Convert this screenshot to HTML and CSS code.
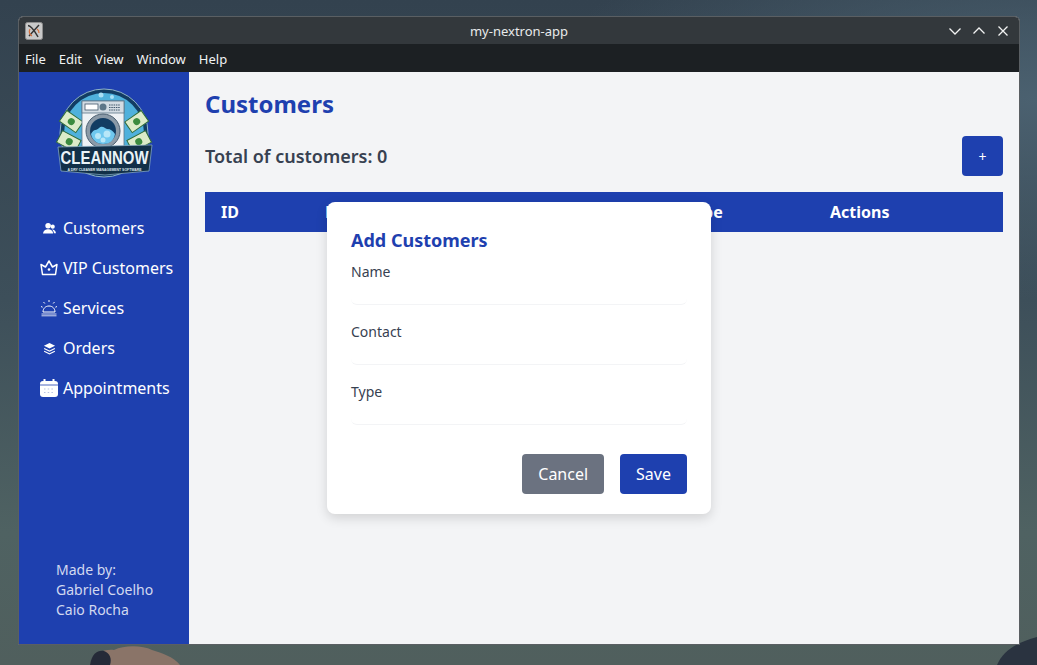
FILE: index.html
```html
<!DOCTYPE html>
<html lang="en">
<head>
<meta charset="utf-8">
<title>my-nextron-app</title>
<link rel="stylesheet" href="styles.css">
</head>
<body>
<svg class="wall-blob wall-blob-left" viewBox="0 0 90 20" aria-hidden="true"><path d="M0 20C4 8 14 4 24 5C34 0 52 0 62 5C72 8 84 12 90 20Z" fill="#8a7468"/><path d="M0 20C2 8 8 5 14 6C20 8 22 14 20 20Z" fill="#252a38"/></svg>
<svg class="wall-blob wall-blob-right" viewBox="0 0 40 28" aria-hidden="true"><path d="M0 28C6 14 18 6 40 0V28Z" fill="#2a3340"/></svg>
<div class="window">
  <header class="titlebar">
    <svg class="app-icon" viewBox="0 0 18 18" aria-hidden="true">
      <rect x=".5" y=".5" width="17" height="17" rx="2" fill="#c9c9c9" stroke="#8e8e8e"/>
      <path d="M3 3.5C7 4 10 10 13 15M14 3L4 14" fill="none" stroke="#333" stroke-width="1.4"/>
      <path d="M5 7a5 5 0 0 0 2 7M12 7a4.500 4.500 0 0 1 2 4" fill="none" stroke="#d9713c" stroke-width="1.200"/>
    </svg>
    <div class="window-title">my-nextron-app</div>
    <div class="window-controls">
      <svg class="control" viewBox="0 0 14 14" aria-hidden="true"><path d="M1.500 4.500L7 10L12.500 4.500"/></svg>
      <svg class="control" viewBox="0 0 14 14" aria-hidden="true"><path d="M1.500 9.500L7 4L12.500 9.500"/></svg>
      <svg class="control" viewBox="0 0 14 14" aria-hidden="true"><path d="M2.500 2.500L11.500 11.500M11.500 2.500L2.500 11.500"/></svg>
    </div>
  </header>
  <nav class="menubar">
    <span class="menu-item">File</span>
    <span class="menu-item">Edit</span>
    <span class="menu-item">View</span>
    <span class="menu-item">Window</span>
    <span class="menu-item">Help</span>
  </nav>
  <div class="app">
    <aside class="sidebar">
      <svg class="logo" viewBox="0 0 100 100" aria-label="CleanNow logo">
        <circle cx="49" cy="49" r="44" fill="#123d63" stroke="#8fb3c9" stroke-width="1"/>
        <circle cx="49" cy="49" r="40" fill="#4fb1dc"/>
        <g class="logo-bill" transform="rotate(35 16 38)"><rect x="6" y="31" width="20" height="13"/><circle cx="16" cy="37.500" r="3.500"/></g>
        <g class="logo-bill" transform="rotate(28 14 58)"><rect x="3" y="51" width="21" height="13"/><circle cx="14" cy="57.500" r="3.500"/></g>
        <g class="logo-bill" transform="rotate(-35 82 38)"><rect x="72" y="31" width="20" height="13"/><circle cx="82" cy="37.500" r="3.500"/></g>
        <g class="logo-bill" transform="rotate(-28 84 58)"><rect x="74" y="51" width="21" height="13"/><circle cx="84" cy="57.500" r="3.500"/></g>
        <circle cx="46" cy="11" r="2.500" fill="#a9e0f5"/><circle cx="57" cy="13" r="2" fill="#a9e0f5"/><circle cx="28" cy="75" r="3" fill="#a9e0f5"/><circle cx="71" cy="75" r="3" fill="#a9e0f5"/>
        <rect x="27" y="17" width="42" height="52" fill="#eef2f5" stroke="#5d7688" stroke-width=".8"/>
        <rect x="27" y="17" width="42" height="12" fill="#d3dce3" stroke="#5d7688" stroke-width=".8"/>
        <rect x="30" y="20" width="13" height="6" fill="#fff" stroke="#40566a" stroke-width=".8"/>
        <circle cx="48" cy="23" r="3.500" fill="#5d7688"/>
        <path d="M54 21h11M54 23.500h11M54 26h11" stroke="#40566a" stroke-width="1.200" stroke-dasharray="1.500 .8"/>
        <circle cx="48" cy="47" r="17" fill="#8b9aa7" stroke="#4d6172" stroke-width="1"/>
        <circle cx="48" cy="47" r="13" fill="#123d63"/>
        <path d="M36 50c3-6 6-3 8-6c3-3 6 0 8 1c4 0 6 2 8 5c-1 7-6 10-12 10s-11-4-12-10Z" fill="#6fc8ef"/>
        <circle cx="43" cy="52" r="3" fill="#b7e7f8"/><circle cx="52" cy="50" r="3.500" fill="#b7e7f8"/><circle cx="48" cy="56" r="2.500" fill="#b7e7f8"/>
        <path class="logo-banner" d="M3 63L97 61L94 87L50 91L6 87Z"/>
        <text class="logo-name" x="49.500" y="80" textLength="88" lengthAdjust="spacingAndGlyphs">CLEANNOW</text>
        <text class="logo-tag" x="49.500" y="86.500" textLength="74" lengthAdjust="spacingAndGlyphs">A DRY CLEANER MANAGEMENT SOFTWARE</text>
      </svg>
      <ul class="nav">
        <li class="nav-item">
          <span class="nav-icon"><svg class="icon-sm" viewBox="0 0 14 14" aria-hidden="true"><circle cx="5.500" cy="4" r="3" fill="#fff"/><path d="M0 12.500C.5 9 3 7.800 5.500 7.800S10.500 9 11 12.500Z" fill="#fff"/><circle cx="10.500" cy="5" r="2.200" fill="#fff"/><path d="M9.500 8.200C11.800 8 13.500 9.500 14 12H11.800C11.500 10.500 10.800 9.200 9.500 8.200Z" fill="#fff"/></svg></span>
          <span>Customers</span>
        </li>
        <li class="nav-item">
          <span class="nav-icon"><svg class="icon-lg" viewBox="0 0 18 18" aria-hidden="true"><path d="M2.500 15.500L1 5.500L5.500 8L9 2L12.500 8L17 5.500L15.500 15.500Z" fill="none" stroke="#fff" stroke-width="1.500" stroke-linejoin="round"/><circle cx="9" cy="10.500" r="1.300" fill="#fff"/></svg></span>
          <span>VIP Customers</span>
        </li>
        <li class="nav-item">
          <span class="nav-icon"><svg class="icon-lg" viewBox="0 0 18 18" aria-hidden="true"><path d="M3 13C3 9.500 5.500 7 9 7S15 9.500 15 13Z" fill="none" stroke="#fff"/><path d="M1.500 15H16.500M1.500 16.800H16.500" stroke="#fff" stroke-width=".8"/><path d="M9 1V3M3.500 3L4.800 4.500M14.500 3L13.200 4.500M1 7.500L2.600 8.200M17 7.500L15.400 8.200" stroke="#fff"/></svg></span>
          <span>Services</span>
        </li>
        <li class="nav-item">
          <span class="nav-icon"><svg class="icon-sm" viewBox="0 0 14 14" aria-hidden="true"><path d="M7 1L13 4L7 7L1 4Z" fill="#fff"/><path d="M1.500 6.500L7 9.200L12.500 6.500L13 7.500L7 10.500L1 7.500Z" fill="#fff"/><path d="M1.500 9.500L7 12.200L12.500 9.500L13 10.500L7 13.500L1 10.500Z" fill="#fff"/></svg></span>
          <span>Orders</span>
        </li>
        <li class="nav-item">
          <span class="nav-icon"><svg class="icon-lg" viewBox="0 0 18 18" aria-hidden="true"><rect x="0" y="2" width="18" height="16" rx="3" fill="#fff"/><path d="M4.500 0V4M13.500 0V4" stroke="#fff" stroke-width="2"/><path d="M0 6H18" stroke="#1e40af" stroke-width=".8"/><path d="M4 10H14M4 13.500H14" stroke="#b9c4e4" stroke-width="1.200" stroke-dasharray="1.500 2.200"/></svg></span>
          <span>Appointments</span>
        </li>
      </ul>
      <div class="credits">
        <div>Made by:</div>
        <div>Gabriel Coelho</div>
        <div>Caio Rocha</div>
      </div>
    </aside>
    <main class="content">
      <h1 class="page-title">Customers</h1>
      <div class="toolbar">
        <h2 class="total">Total of customers: 0</h2>
        <button class="add-button">+</button>
      </div>
      <div class="table-head">
        <span>ID</span>
        <span>Name</span>
        <span>Contact</span>
        <span>Type</span>
        <span>Actions</span>
      </div>
      <section class="modal">
        <h3 class="modal-title">Add Customers</h3>
        <div class="field">
          <label class="field-label">Name</label>
          <div class="field-input"></div>
        </div>
        <div class="field">
          <label class="field-label">Contact</label>
          <div class="field-input"></div>
        </div>
        <div class="field">
          <label class="field-label">Type</label>
          <div class="field-input"></div>
        </div>
        <div class="modal-actions">
          <button class="btn btn-cancel">Cancel</button>
          <button class="btn btn-save">Save</button>
        </div>
      </section>
    </main>
  </div>
</div>
</body>
</html>
```

FILE: styles.css
```css
* { box-sizing: border-box; }

html, body { height: 100%; }

body {
  margin: 0;
  padding: 16px 17px 20px 18px;
  overflow: hidden;
  position: relative;
  font-family: "Noto Sans", sans-serif;
  background:
    radial-gradient(ellipse 500px 200px at 1037px 100px, #4b6170 0%, rgba(75, 97, 112, 0) 100%),
    linear-gradient(180deg, #33424f 0%, #3d4f5a 45%, #4f6262 80%, #505f5d 100%);
}

.wall-blob { position: absolute; bottom: 0; }
.wall-blob-left { left: 90px; width: 90px; height: 20px; }
.wall-blob-right { right: 0; width: 40px; height: 28px; }

.window {
  position: relative;
  height: 629px;
  display: flex;
  flex-direction: column;
  border: 1px solid #5a5f63;
  border-radius: 5px 5px 0 0;
  overflow: hidden;
  background: #f3f4f6;
}

.titlebar {
  height: 27px;
  flex: none;
  display: flex;
  align-items: center;
  position: relative;
  padding: 0 9px 0 6px;
  background: #33383c;
  color: #e8eaeb;
}

.app-icon { width: 18px; height: 18px; }

.window-title {
  position: absolute;
  left: 0;
  right: 0;
  text-align: center;
  font-size: 13px;
}

.window-controls {
  margin-left: auto;
  display: flex;
  gap: 10px;
  align-items: center;
}

.control {
  width: 14px;
  height: 14px;
  fill: none;
  stroke: #f2f3f3;
  stroke-width: 1.300;
}

.menubar {
  height: 28px;
  flex: none;
  display: flex;
  align-items: center;
  gap: 13px;
  padding: 2px 6px 0;
  background: #1c2023;
  color: #f0f2f3;
  font-size: 13px;
}

.app {
  flex: 1;
  min-height: 0;
  display: flex;
}

.sidebar {
  width: 170px;
  flex: none;
  display: flex;
  flex-direction: column;
  padding: 12px 0 24px;
  background: #1e40af;
  color: #fff;
}

.logo {
  width: 100px;
  height: 100px;
  margin: 0 0 24px 36px;
}

.logo-bill rect { fill: #dcebc9; stroke: #2f6b3a; stroke-width: 1; }
.logo-bill circle { fill: #3c8b3f; }
.logo-banner { fill: #123048; stroke: #8fb3c9; stroke-width: .7; }

.logo-name {
  font-family: "Liberation Sans", sans-serif;
  font-size: 19px;
  font-weight: 700;
  fill: #eaf3f8;
  text-anchor: middle;
}

.logo-tag {
  font-family: "Liberation Sans", sans-serif;
  font-size: 4px;
  font-weight: 700;
  fill: #dfe9ef;
  text-anchor: middle;
}

.nav {
  list-style: none;
  margin: 0;
  padding: 0;
}

.nav-item {
  height: 40px;
  display: flex;
  align-items: center;
  gap: 4px;
  padding-left: 20px;
  font-size: 16px;
}

.nav-icon {
  width: 20px;
  flex: none;
  display: flex;
  justify-content: center;
  align-items: center;
}

.icon-sm { width: 13px; height: 13px; }
.icon-lg { width: 18px; height: 18px; }

.credits {
  margin-top: auto;
  padding-left: 37px;
  font-size: 14px;
  line-height: 20px;
  color: #d2d9ef;
}

.content {
  flex: 1;
  min-width: 0;
  position: relative;
  padding: 16px;
}

.page-title {
  margin: 0;
  height: 32px;
  font-size: 24px;
  line-height: 32px;
  font-weight: 700;
  color: #1e40af;
}

.toolbar {
  margin-top: 16px;
  display: flex;
  align-items: center;
  justify-content: space-between;
}

.total {
  margin: 0;
  font-size: 18px;
  font-weight: 600;
  color: #374151;
}

.add-button {
  width: 41px;
  height: 40px;
  border: 0;
  border-radius: 4px;
  background: #1e40af;
  color: #fff;
  font-family: inherit;
  font-size: 14px;
}

.table-head {
  margin-top: 16px;
  height: 40px;
  display: grid;
  grid-template-columns: 104px 180px 180px 145px 1fr;
  align-items: center;
  padding-left: 16px;
  background: #1e40af;
  color: #fff;
  font-size: 16px;
  font-weight: 700;
}

.modal {
  position: absolute;
  left: 138px;
  top: 130px;
  width: 384px;
  height: 312px;
  padding: 24px;
  border-radius: 8px;
  background: #fff;
  box-shadow: 0 4px 12px rgba(0, 0, 0, .14);
}

.modal-title {
  margin: 0 0 6px;
  font-size: 18px;
  line-height: 28px;
  font-weight: 700;
  color: #1e40af;
}

.field { height: 60px; }

.field-label {
  display: block;
  height: 24px;
  padding-top: 2px;
  font-size: 14px;
  line-height: 20px;
  color: #374151;
}

.field-input {
  height: 21px;
  margin-top: 0;
  border: 1px solid #f3f4f6;
  border-width: 0 0 1px;
  border-radius: 6px;
}

.modal-actions {
  margin-top: 14px;
  display: flex;
  justify-content: flex-end;
  gap: 16px;
}

.btn {
  height: 40px;
  padding: 0 16px;
  border: 0;
  border-radius: 4px;
  color: #fff;
  font-family: inherit;
  font-size: 16px;
}

.btn-cancel { background: #6b7280; }
.btn-save { background: #1e40af; }
```
